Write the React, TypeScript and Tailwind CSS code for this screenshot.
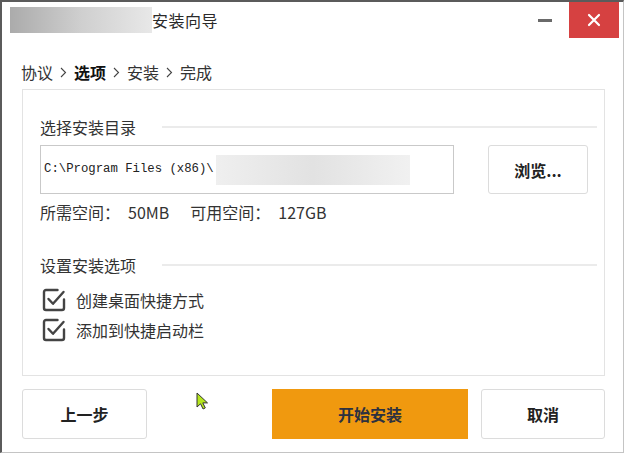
import React from "react";

const cjk = { fontFamily: '"Noto Sans CJK SC", "Noto Sans", sans-serif' };

function Check() {
  return (
    <svg width="24" height="24" viewBox="0 0 24 24" fill="none" className="shrink-0">
      <path
        d="M15.5 2H4a2 2 0 0 0-2 2v16a2 2 0 0 0 2 2h16a2 2 0 0 0 2-2v-8.5"
        stroke="#444"
        strokeWidth="2.4"
        strokeLinecap="round"
      />
      <path d="M6.5 11l4.5 4.8L21.5 4" stroke="#444" strokeWidth="2.4" strokeLinecap="round" strokeLinejoin="round" />
    </svg>
  );
}

function Chevron() {
  return (
    <svg width="7" height="11" viewBox="0 0 7 11" className="mx-[7px]">
      <path d="M1 1l4.5 4.5L1 10" stroke="#444" strokeWidth="1.1" fill="none" />
    </svg>
  );
}

function SectionHeader({ title }: { title: string }) {
  return (
    <div className="flex items-center h-[24px] pr-[7px]">
      <span className="text-[16px] leading-[24px] text-[#333] whitespace-nowrap">{title}</span>
      <div className="ml-[26px] flex-1 h-[2px] bg-[#ebebeb]" />
    </div>
  );
}

export default function App() {
  return (
    <div className="w-[625px] h-[453px] bg-white" style={cjk}>
      <div className="relative w-[624px] h-[453px] bg-white border-t-2 border-l-2 border-t-[#5b5b5b] border-l-[#5b5b5b] border-r border-b border-r-[#c4c4c4] border-b-[#c4c4c4] box-border">
        {/* Title bar */}
        <div className="flex items-start h-[36px]">
          <div className="ml-[8px] mt-[5px] w-[142px] h-[26px] bg-gradient-to-r from-[#ababab] via-[#cfcfcf] to-[#e8e8e8]" />
          <div className="h-[36px] flex items-center text-[16px] text-[#2a2a2a] tracking-[0.5px]">安装向导</div>
          <div className="flex-1" />
          <div className="h-[36px] flex items-center mr-[17px]">
            <div className="w-[14px] h-[3px] bg-[#6a6a6a]" />
          </div>
          <div className="w-[50px] h-[36px] bg-[#d64141] flex items-center justify-center mr-[4px]">
            <svg width="14" height="14" viewBox="0 0 14 14">
              <path d="M2 2l10 10M12 2L2 12" stroke="white" strokeWidth="2.2" strokeLinecap="round" />
            </svg>
          </div>
        </div>

        {/* Breadcrumb */}
        <div className="h-[51px] pt-[22px] pl-[19px]">
          <div className="flex items-center h-[24px] text-[16px] leading-[24px] text-[#333]">
            <span>协议</span>
            <Chevron />
            <span className="font-bold text-[#111]">选项</span>
            <Chevron />
            <span>安装</span>
            <Chevron />
            <span>完成</span>
          </div>
        </div>

        {/* Panel */}
        <div className="ml-[20px] w-[583px] h-[287px] border border-[#e3e3e3] pl-[17px] pt-[25px]">
          <SectionHeader title="选择安装目录" />
          <div className="flex mt-[6px]">
            <div className="w-[414px] h-[49px] border border-[#c9c9c9] flex items-center pl-[3px] relative">
              <span
                className="text-[12.3px] text-[#222] whitespace-nowrap"
                style={{ fontFamily: '"Liberation Mono", "DejaVu Sans Mono", monospace' }}
              >
                C:\Program Files (x86)\
              </span>
              <div className="ml-[2px] w-[194px] h-[30px] bg-gradient-to-r from-[#efefef] via-[#e2e2e2] to-[#f1f1f1]" />
            </div>
            <button className="ml-[34px] w-[100px] h-[49px] border border-[#dcdcdc] rounded-[3px] bg-white text-[16px] font-bold text-[#222] flex items-center justify-center">
              浏览...
            </button>
          </div>
          <div className="mt-[6px] h-[24px] flex items-center text-[16px] text-[#333] whitespace-nowrap">
            <span>所需空间：</span>
            <span className="ml-[8px]">50MB</span>
            <span className="ml-[21px]">可用空间：</span>
            <span className="ml-[8px]">127GB</span>
          </div>
          <div className="mt-[29px]">
            <SectionHeader title="设置安装选项" />
          </div>
          <div className="mt-[11px] flex flex-col gap-[6px] pl-[2px]">
            <div className="flex items-center h-[24px] gap-[10px] text-[16px] text-[#333]">
              <Check />
              <span>创建桌面快捷方式</span>
            </div>
            <div className="flex items-center h-[24px] gap-[10px] text-[16px] text-[#333]">
              <Check />
              <span>添加到快捷启动栏</span>
            </div>
          </div>
        </div>

        {/* Buttons */}
        <div className="flex ml-[20px] mt-[13px]">
          <button className="w-[125px] h-[50px] border border-[#dcdcdc] rounded-[3px] bg-white text-[16px] font-bold text-[#222]">
            上一步
          </button>
          <div className="w-[125px]" />
          <button className="w-[196px] h-[50px] bg-[#f0990f] text-[16px] font-bold text-[#2d3140]">
            开始安装
          </button>
          <div className="w-[13px]" />
          <button className="w-[124px] h-[50px] border border-[#dcdcdc] rounded-[3px] bg-white text-[16px] font-bold text-[#222]">
            取消
          </button>
        </div>

        {/* Mouse cursor */}
        <svg className="absolute left-[194px] top-[390px]" width="13" height="18" viewBox="0 0 13 18">
          <path d="M1 1v14l3.5-3.2 2.6 5.2 2.2-1.1-2.5-5H11.5z" fill="#b5e61d" stroke="#333" strokeWidth="1" strokeLinejoin="round" />
        </svg>
      </div>
    </div>
  );
}
